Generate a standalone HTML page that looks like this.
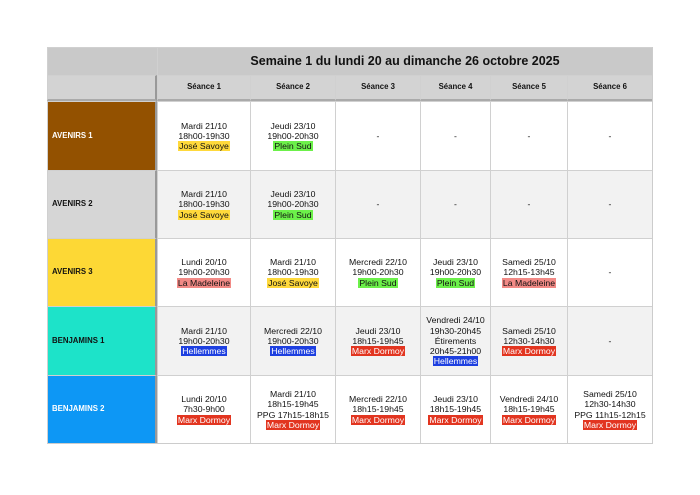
<!DOCTYPE html><html><head><meta charset="utf-8"><style>
body{margin:0;background:#fff;width:700px;height:495px;position:relative;font-family:"Liberation Sans",Arial,sans-serif;}
.g{position:absolute;left:47px;top:47px;display:grid;grid-template-columns:110px 93px 85px 85px 70px 77px 85px;grid-template-rows:28px 26px 69px 68px 68px 69px 68px;border-right:1px solid #ccc;border-bottom:1px solid #ccc;}
.g>div{border-left:1px solid #d0d0d0;border-top:1px solid #d0d0d0;display:flex;align-items:center;justify-content:center;text-align:center;font-size:8.7px;line-height:10.2px;color:#111;box-sizing:border-box}
p{margin:0}
.h{background:#c9c9c9;}
.t{grid-column:2/8;font-size:12.5px!important;font-weight:bold}
.sh{background:#d3d3d3;font-weight:bold;font-size:7.8px!important;border-bottom:2px solid #aaa!important}
.l{justify-content:flex-start!important;padding-left:4px;font-weight:bold;font-size:7.8px!important;border-right:2px solid #999!important}
.w{background:#fff}.e{background:#f2f2f2}
.y{background:#ffd93b}.gr{background:#6cf04a}.s{background:#f28a86}.b{background:#1d3fe0;color:#fff}.r{background:#e23520;color:#fff}
span{padding:0 1px}
</style></head><body><div class="g">
<div class="h"></div><div class="h t">Semaine 1 du lundi 20 au dimanche 26 octobre 2025</div>
<div class="sh" style="border-right:2px solid #999"></div><div class="sh">Séance 1</div><div class="sh">Séance 2</div><div class="sh">Séance 3</div><div class="sh">Séance 4</div><div class="sh">Séance 5</div><div class="sh">Séance 6</div>
<div class="l" style="background:#935100;color:#fff">AVENIRS 1</div><div class="w"><p>Mardi 21/10<br>18h00-19h30<br><span class="y">José Savoye</span></p></div><div class="w"><p>Jeudi 23/10<br>19h00-20h30<br><span class="gr">Plein Sud</span></p></div><div class="w">-</div><div class="w">-</div><div class="w">-</div><div class="w">-</div>
<div class="l" style="background:#d6d6d6">AVENIRS 2</div><div class="e"><p>Mardi 21/10<br>18h00-19h30<br><span class="y">José Savoye</span></p></div><div class="e"><p>Jeudi 23/10<br>19h00-20h30<br><span class="gr">Plein Sud</span></p></div><div class="e">-</div><div class="e">-</div><div class="e">-</div><div class="e">-</div>
<div class="l" style="background:#fdd835">AVENIRS 3</div><div class="w"><p>Lundi 20/10<br>19h00-20h30<br><span class="s">La Madeleine</span></p></div><div class="w"><p>Mardi 21/10<br>18h00-19h30<br><span class="y">José Savoye</span></p></div><div class="w"><p>Mercredi 22/10<br>19h00-20h30<br><span class="gr">Plein Sud</span></p></div><div class="w"><p>Jeudi 23/10<br>19h00-20h30<br><span class="gr">Plein Sud</span></p></div><div class="w"><p>Samedi 25/10<br>12h15-13h45<br><span class="s">La Madeleine</span></p></div><div class="w">-</div>
<div class="l" style="background:#1de3c9">BENJAMINS 1</div><div class="e"><p>Mardi 21/10<br>19h00-20h30<br><span class="b">Hellemmes</span></p></div><div class="e"><p>Mercredi 22/10<br>19h00-20h30<br><span class="b">Hellemmes</span></p></div><div class="e"><p>Jeudi 23/10<br>18h15-19h45<br><span class="r">Marx Dormoy</span></p></div><div class="e"><p>Vendredi 24/10<br>19h30-20h45<br>Étirements<br>20h45-21h00<br><span class="b">Hellemmes</span></p></div><div class="e"><p>Samedi 25/10<br>12h30-14h30<br><span class="r">Marx Dormoy</span></p></div><div class="e">-</div>
<div class="l" style="background:#0d97f5;color:#fff">BENJAMINS 2</div><div class="w"><p>Lundi 20/10<br>7h30-9h00<br><span class="r">Marx Dormoy</span></p></div><div class="w"><p>Mardi 21/10<br>18h15-19h45<br>PPG 17h15-18h15<br><span class="r">Marx Dormoy</span></p></div><div class="w"><p>Mercredi 22/10<br>18h15-19h45<br><span class="r">Marx Dormoy</span></p></div><div class="w"><p>Jeudi 23/10<br>18h15-19h45<br><span class="r">Marx Dormoy</span></p></div><div class="w"><p>Vendredi 24/10<br>18h15-19h45<br><span class="r">Marx Dormoy</span></p></div><div class="w"><p>Samedi 25/10<br>12h30-14h30<br>PPG 11h15-12h15<br><span class="r">Marx Dormoy</span></p></div>
</div></body></html>
